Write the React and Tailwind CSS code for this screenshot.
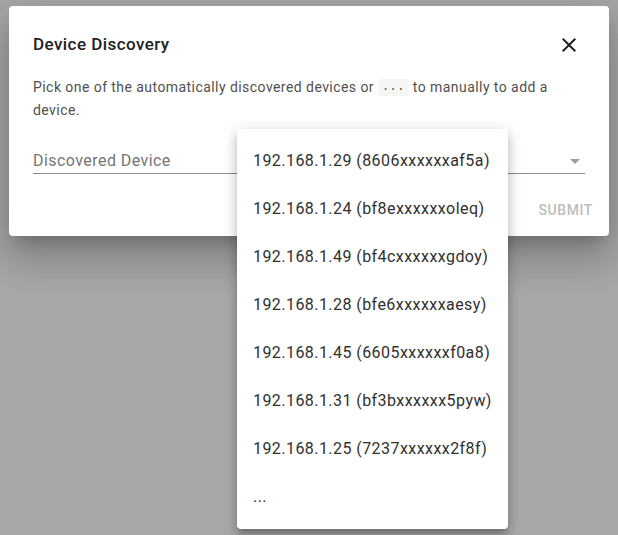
import React from "react";

const devices = [
  "192.168.1.29 (8606xxxxxxaf5a)",
  "192.168.1.24 (bf8exxxxxxoleq)",
  "192.168.1.49 (bf4cxxxxxxgdoy)",
  "192.168.1.28 (bfe6xxxxxxaesy)",
  "192.168.1.45 (6605xxxxxxf0a8)",
  "192.168.1.31 (bf3bxxxxxx5pyw)",
  "192.168.1.25 (7237xxxxxx2f8f)",
  "...",
];

const App = () => {
  return (
    <div
      className="relative w-[618px] h-[535px] overflow-hidden bg-[#a8a8a8] pt-[6px] pl-[9px] tracking-[0.44px]"
      style={{ fontFamily: "Roboto, 'Liberation Sans', sans-serif" }}
    >
      {/* Dialog */}
      <div className="w-[600px] bg-white rounded-[4px] shadow-[0px_11px_15px_-7px_rgba(0,0,0,0.2),0px_24px_38px_3px_rgba(0,0,0,0.14),0px_9px_46px_8px_rgba(0,0,0,0.12)]">
        <div className="flex items-center justify-between pt-[15px] pl-6 pr-4 h-[62px]">
          <h2 className="text-[17px] font-medium text-[#212121]">Device Discovery</h2>
          <button className="w-12 h-12 flex items-center justify-center text-[#212121]">
            <svg width="24" height="24" viewBox="0 0 24 24" className="mt-[1px]">
              <path
                fill="currentColor"
                d="M19 6.41L17.59 5 12 10.59 6.41 5 5 6.41 10.59 12 5 17.59 6.41 19 12 13.41 17.59 19 19 17.59 13.41 12z"
              />
            </svg>
          </button>
        </div>

        <div className="px-6">
          <p className="mt-[8px] text-[14px] leading-[23px] text-[#505050]">
            Pick one of the automatically discovered devices or{" "}
            <code
              className="inline-block align-middle -mt-[2px] leading-[17px] bg-[#f6f6f6] rounded-[3px] px-[4px] text-[12px] text-[#505050]"
              style={{ fontFamily: "'Liberation Mono', monospace" }}
            >
              ...
            </code>{" "}
            to manually to add a device.
          </p>

          <div className="mt-[27px] h-[25px] flex items-center justify-between border-b border-[#8c8c8c]">
            <span className="text-[16px] text-[#757575]">Discovered Device</span>
            <svg width="24" height="24" viewBox="0 0 24 24" className="-mr-[2px] text-[#9e9e9e]">
              <path fill="currentColor" d="M7 10l5 5 5-5z" />
            </svg>
          </div>
        </div>

        <div className="mt-[10px] p-2 flex justify-end">
          <button
            disabled
            className="h-9 px-2 text-[14px] font-medium uppercase tracking-[0.6px] text-[#bdbdbd]"
          >
            Submit
          </button>
        </div>
      </div>

      {/* Open select menu */}
      <ul className="absolute left-[237px] top-[129px] w-[271px] py-2 bg-white rounded-[4px] shadow-[0px_5px_5px_-3px_rgba(0,0,0,0.2),0px_8px_10px_1px_rgba(0,0,0,0.14),0px_3px_14px_2px_rgba(0,0,0,0.12)]">
        {devices.map((d) => (
          <li key={d} className="h-12 flex items-center px-4 text-[16px] text-[#303030]">
            {d}
          </li>
        ))}
      </ul>
    </div>
  );
};

export default App;
